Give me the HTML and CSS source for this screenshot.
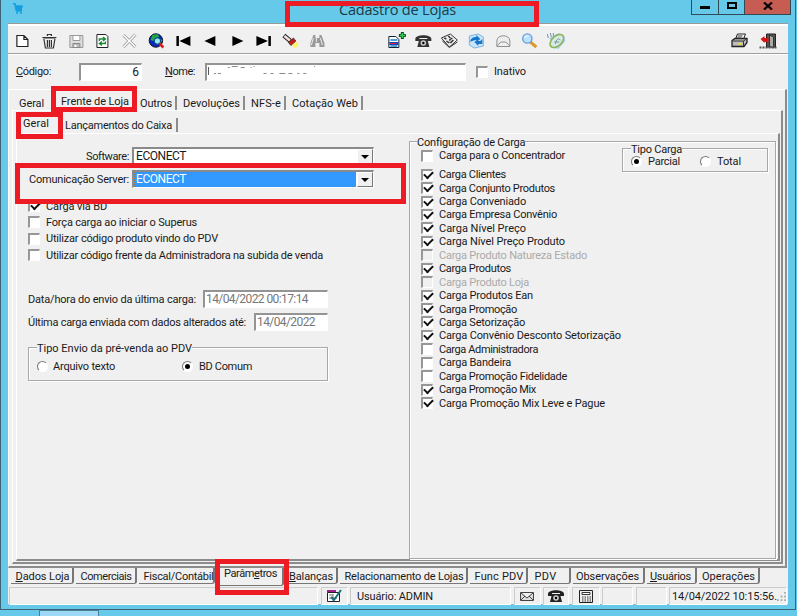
FILE: index.html
```html
<!DOCTYPE html>
<html lang="pt-BR">
<head>
<meta charset="utf-8">
<title>Cadastro de Lojas</title>
<link rel="stylesheet" href="styles.css">
</head>
<body>
<div class="window">
  <header class="titlebar">
    <svg class="appicon" viewBox="0 0 10 11"><path d="M0 .8h2l1 6h6M2 3h7v1H3M3 5.500h6M3 8h6" fill="none" stroke="#139fe0" stroke-width="1.6"/><circle cx="4" cy="10" r="1" fill="#139fe0"/><circle cx="8" cy="10" r="1" fill="#139fe0"/></svg>
    <h1><span data-w="117">Cadastro de Lojas</span></h1>
    <div class="winbtns"><i class="min"><b></b></i><i class="max"><b></b></i><i class="close"><svg viewBox="0 0 10 8"><path d="M1 .5l8 7M9 .5l-8 7" stroke="#000" stroke-width="2.2"/></svg></i></div>
  </header>
  <main class="client">
    <nav class="toolbar">
      <div class="tools">
        <svg viewBox="0 0 18 16"><path d="M3.500 2.500h7l4 4v7h-11zM10.500 2.500v4h4" fill="#fff" stroke="#222" stroke-width="1.2"/></svg>
        <svg viewBox="0 0 18 16"><path d="M3 5h12M2 4.500h14M7 3V1.500h4V3M3.500 6l1.500 9h8l1.500-9M7 7v7M9 7v7M11 7v7" fill="none" stroke="#333" stroke-width="1.2"/></svg>
        <svg viewBox="0 0 18 16"><path d="M2.500 2.500h13v12h-13z" fill="#ddd" stroke="#999"/><path d="M5.500 2.500h7v5h-7z" fill="#fff" stroke="#999"/><path d="M5.500 10.500h7v4h-7z" fill="#bbb" stroke="#888"/><path d="M7 12h2v2H7z" fill="#fff"/></svg>
        <svg viewBox="0 0 18 16"><path d="M3.500 1.500h9l2 2v11h-11z" fill="#fff" stroke="#222"/><path d="M6 8V6h5M9.500 4L12 6 9.500 8M12 8.500v2H7M8.500 8.500L6 10.500l2.500 2" fill="none" stroke="#158c35" stroke-width="1.4"/></svg>
        <svg viewBox="0 0 18 16"><path d="M3 2l12 12M15 1.500L3 14" stroke="#999" stroke-width="3"/><path d="M3 2l12 12M15 1.500L3 14" stroke="#fff" stroke-width="1.4"/></svg>
        <svg viewBox="0 0 18 16"><circle cx="8.500" cy="7.500" r="6.700" fill="#0828c0" stroke="#112"/><path d="M5 2l5-1 2 3-4 1-2 3-3-1zM12 6l3 1-2 4-3-2z" fill="#21a743"/><circle cx="10" cy="8" r="3.200" fill="#8deaf3" stroke="#083d7a"/><path d="M12 10.500l4 4" stroke="#d52020" stroke-width="2.500"/></svg>
        <svg viewBox="0 0 18 16"><path d="M2 3h2.500v10H2zM5 8l11-5v10z"/></svg>
        <svg viewBox="0 0 18 16"><path d="M3 8l11-5v10z"/></svg>
        <svg viewBox="0 0 18 16"><path d="M16 8L5 3v10z"/></svg>
        <svg viewBox="0 0 18 16"><path d="M14 3h2.500v10H14zM13.500 8L2 3v10z"/></svg>
        <svg viewBox="0 0 18 16"><path d="M2.500 2.500L9 8" stroke="#222" stroke-width="4.500"/><path d="M3 3l5.500 4.500" stroke="#f6dcdc" stroke-width="2.500"/><path d="M7 9.500L12 5l2.500 3-5 4.500z" fill="#c51c18" stroke="#432" stroke-width=".8"/><path d="M11 12l4-3 2 1-1 4-4 1z" fill="#fff45a"/></svg>
        <svg viewBox="0 0 18 16"><path d="M5 2h2v3h4V2h2l3 8v4h-5v-4H7v4H2v-4z" fill="#999"/><path d="M5 5l-2 7M8 5v4M12 5l2 7" stroke="#eee"/></svg>
      </div>
      <div class="tools mid">
        <svg viewBox="0 0 18 16"><path d="M1.500 3.500h7l3 3v8h-10z" fill="#fff" stroke="#123"/><path d="M3 7h7M3 13h7" stroke="#1680d0" stroke-width="1.500"/><path d="M2 9h9v3H2z" fill="#1243c0"/><path d="M3 10.500h6" stroke="#e22"/><path d="M15 -1v7M11.500 2.500h7" stroke="#064c22" stroke-width="3"/><path d="M15 0v5M12.500 2.500h5" stroke="#34ce59" stroke-width="1.300"/></svg>
        <svg viewBox="0 0 18 16"><path d="M1 6c0-5 16-5 16 0v2h-4V5H5v3H1zM5 6h8l2 8H3z" fill="#333"/><circle cx="9" cy="10" r="2.800" fill="#ccc"/><circle cx="9" cy="10" r="1.200"/></svg>
        <svg viewBox="0 0 18 16"><path d="M1 5l9-4 7 6-8 7z" fill="#eee" stroke="#333"/><path d="M2 8l7 6.500L17 9" fill="none" stroke="#333"/><path d="M4 5l2 1M8 3l2 2M12 5l-3 2M6 8l3 2M13 7l-3 3M9 7l1 1" stroke="#333" stroke-width="1.500"/></svg>
        <svg viewBox="0 0 18 16"><path d="M2 3l9-2 5 3v9l-9 2-5-3z" fill="#cbe6fa" stroke="#79b5e3"/><path d="M3 9c0-4 3-5 6-5V2l4 4-4 3V7C6 7 5 8 3 9zM15 6v5h-4v2l-4-4 4-3v2h2z" fill="#1676cc"/></svg>
        <svg viewBox="0 0 18 16"><path d="M2.500 13.500V8c0-7 13-7 13 0v5.500zM2.500 13l4-4h5l4 4" fill="#eee" stroke="#909090"/></svg>
        <svg viewBox="0 0 18 16"><path d="M10 9l6 5" stroke="#d99a28" stroke-width="3"/><circle cx="7" cy="5.500" r="4.600" fill="#b9e3fd" stroke="#6b9ddd" stroke-width="1.400"/><path d="M4 5c1-2 3-2 4-2" stroke="#fff" fill="none"/></svg>
        <svg viewBox="0 0 18 16"><path d="M2 5l9-5 6 3 1 5-7 8-4-1z" fill="#a7d1ee"/><ellipse cx="9.500" cy="8" rx="8" ry="4.900" transform="rotate(-42 9.500 8)" fill="#d7e9e3" stroke="#8eb45c" stroke-width="1.600"/><path d="M8 11c1-5 3-6 5-4M7 9h5M0 1l1 4M3 0l1 4M6 0v3" stroke="#7993a0" fill="none"/></svg>
      </div>
      <div class="tools end">
        <svg viewBox="0 0 18 16"><path d="M5 6l2-5h8l-2 5" fill="#fff" stroke="#222"/><path d="M1.500 7.500l3-2h12v4l-3 4h-12z" fill="#bbb" stroke="#222" stroke-width="1.300"/><path d="M2 8h11v5M13 8l3-2M7 3h5M6 5h5" fill="none" stroke="#333"/><path d="M8 10h3v1.500H8z" fill="#f1ee00"/></svg>
        <svg viewBox="0 0 18 16"><path d="M7 1h9v13H7z" fill="#555" stroke="#222"/><path d="M10 2l4 2v11l-4-2z" fill="#aaa" stroke="#333"/><path d="M0 14.500h18" stroke="#555" stroke-width="2" stroke-dasharray="2 1"/><path d="M1 6l4-3v2h4v4H5v1z" fill="#d91516"/></svg>
      </div>
    </nav>
    <div class="idrow">
      <label class="l-cod"><span data-w="35"><u>C</u>ódigo:</span></label><div class="field f-cod">6</div>
      <label class="l-nome"><span data-w="30"><u>N</u>ome:</span></label>
      <div class="field f-nome"><svg viewBox="0 0 260 15"><path d="M1.500 2v8" stroke="#555"/><path d="M7 8.500h2m2 0h3M21 2.500h2m2-1h6m3 1h4m6 0h1M57 8.500h3m4 0h3m6 0h6m3 0h4m5 0h2m4 0h3M47 1.500h1m60 0h1" stroke="#888"/></svg></div>
      <i class="cb"></i><span class="inativo" data-w="32">Inativo</span>
    </div>
    <section class="page outer">
      <div class="tabs t1">
        <span class="tab a"><span data-w="25">Geral</span></span><span class="tab b on"><span data-w="68">Frente de Loja</span></span><span class="tab c cut"><span data-w="32">Outros</span></span><span class="tab d cut"><span data-w="57">Devoluções</span></span><span class="tab e cut"><span data-w="30">NFS-e</span></span><span class="tab f cut"><span data-w="66">Cotação Web</span></span>
      </div>
      <section class="page middle">
        <div class="tabs t2"><span class="tab g on"><span data-w="26">Geral</span></span><span class="tab h cut"><span data-w="107">Lançamentos do Caixa</span></span></div>
        <section class="page inner">
          <div class="left">
            <div class="comborow"><label><span data-w="43">Software:</span></label><div class="combo"><span class="val"><span data-w="50">ECONECT</span></span><i class="drop"></i></div></div>
            <div class="comborow second"><label><span data-w="100">Comunicação Server:</span></label><div class="combo"><span class="val sel"><span data-w="50">ECONECT</span></span><i class="drop"></i></div></div>
            <ul class="opts">
              <li><i class="cb on"></i><span data-w="61">Carga via BD</span></li>
              <li><i class="cb"></i><span data-w="151">Força carga ao iniciar o Superus</span></li>
              <li><i class="cb"></i><span data-w="172">Utilizar código produto vindo do PDV</span></li>
              <li><i class="cb"></i><span data-w="277">Utilizar código frente da Administradora na subida de venda</span></li>
            </ul>
            <div class="daterow"><label data-w="168">Data/hora do envio da última carga:</label><div class="field d1"><span data-w="102">14/04/2022 00:17:14</span></div></div>
            <div class="daterow"><label data-w="218">Última carga enviada com dados alterados até:</label><div class="field d2"><span data-w="58">14/04/2022</span></div></div>
            <div class="group envio"><span class="legend"><span data-w="155">Tipo Envio da pré-venda ao PDV</span></span>
              <i class="rd"></i><span class="r1"><span data-w="62">Arquivo texto</span></span><i class="rd on"></i><span class="r2"><span data-w="53">BD Comum</span></span></div>
          </div>
          <div class="group config"><span class="legend"><span data-w="108">Configuração de Carga</span></span>
            <ul class="list">
              <li class="first"><i class="cb"></i><span data-w="126">Carga para o Concentrador</span></li>
              <li><i class="cb on"></i><span data-w="67">Carga Clientes</span></li>
              <li><i class="cb on"></i><span data-w="116">Carga Conjunto Produtos</span></li>
              <li><i class="cb on"></i><span data-w="87">Carga Conveniado</span></li>
              <li><i class="cb on"></i><span data-w="118">Carga Empresa Convênio</span></li>
              <li><i class="cb on"></i><span data-w="87">Carga Nível Preço</span></li>
              <li><i class="cb on"></i><span data-w="126">Carga Nível Preço Produto</span></li>
              <li class="off"><i class="cb"></i><span data-w="148">Carga Produto Natureza Estado</span></li>
              <li><i class="cb on"></i><span data-w="72">Carga Produtos</span></li>
              <li class="off"><i class="cb"></i><span data-w="90">Carga Produto Loja</span></li>
              <li><i class="cb on"></i><span data-w="94">Carga Produtos Ean</span></li>
              <li><i class="cb on"></i><span data-w="78">Carga Promoção</span></li>
              <li><i class="cb on"></i><span data-w="86">Carga Setorização</span></li>
              <li><i class="cb on"></i><span data-w="182">Carga Convênio Desconto Setorização</span></li>
              <li><i class="cb"></i><span data-w="99">Carga Administradora</span></li>
              <li><i class="cb"></i><span data-w="72">Carga Bandeira</span></li>
              <li><i class="cb"></i><span data-w="128">Carga Promoção Fidelidade</span></li>
              <li><i class="cb on"></i><span data-w="97">Carga Promoção Mix</span></li>
              <li><i class="cb on"></i><span data-w="166">Carga Promoção Mix Leve e Pague</span></li>
            </ul>
            <div class="group tipo"><span class="legend"><span data-w="51">Tipo Carga</span></span><i class="rd on"></i><span class="r3"><span data-w="32">Parcial</span></span><i class="rd"></i><span class="r4"><span data-w="24">Total</span></span></div>
          </div>
        </section>
      </section>
    </section>
    <div class="btabs">
      <span class="bt k1"><span data-w="54"><u>D</u>ados Loja</span></span><span class="bt k2"><span data-w="51">Comerciais</span></span><span class="bt k3"><span data-w="70">Fiscal/Contábil</span></span><span class="bt k4 on"><span data-w="53">Parâm<u>e</u>tros</span></span><span class="bt k5"><span data-w="44"><u>B</u>alanças</span></span><span class="bt k6"><span data-w="119">Relacionamento de Lojas</span></span><span class="bt k7"><span data-w="49">Func PDV</span></span><span class="bt k8"><span data-w="22">PDV</span></span><span class="bt k9"><span data-w="63">Observações</span></span><span class="bt k10"><span data-w="41"><u>U</u>suários</span></span><span class="bt k11"><span data-w="53">Operações</span></span>
    </div>
    <footer class="status">
      <div></div>
      <div><svg viewBox="0 0 18 16"><path d="M2.500 4.500h12v9h-12z" fill="#fff" stroke="#222"/><path d="M2 3h9" stroke="#a0208a" stroke-width="2"/><path d="M4 10h8M4 7h4M8 6v7" stroke="#777"/><path d="M6 9l3 3 7-10" fill="none" stroke="#176f7b" stroke-width="2"/></svg></div>
      <div class="user"><span data-w="76">Usuário: ADMIN</span></div>
      <div><svg viewBox="0 0 18 16"><path d="M2.500 4.500h13v8h-13zM3 5l6 5 6-5M3 12l4-4M15 12l-4-4" fill="#ddd" stroke="#444"/></svg></div>
      <div><svg viewBox="0 0 18 16"><path d="M1 6c0-5 16-5 16 0v2h-4V5H5v3H1zM5 6h8l2 8H3z" fill="#222"/><circle cx="9" cy="10" r="2.800" fill="#ccc"/><circle cx="9" cy="10" r="1.200"/></svg></div>
      <div><svg viewBox="0 0 18 16"><path d="M2.500 2.500h13v12h-13z" fill="#eee" stroke="#222"/><path d="M5 4.500h8v2H5z" fill="#fff" stroke="#333"/><path d="M5 9h9M5 11h9M5 13h9" stroke="#333" stroke-dasharray="1.500 1"/></svg></div>
      <div></div><div></div>
      <div class="clock"><span data-w="105">14/04/2022 10:15:56.</span><svg class="grip" viewBox="0 0 10 10"><path d="M8 1h2M4 5h2m2 0h2M0 9h2m2 0h2m2 0h2" stroke="#aaa" stroke-width="2"/></svg></div>
    </footer>
  </main>
</div>
<div class="taskbar"><i></i></div>
<i class="mark m1"></i><i class="mark m2"></i><i class="mark m3"></i><i class="mark m4"></i><i class="mark m5"></i>
<script src="fit.js"></script>
</body>
</html>
```
FILE: styles.css
```css
* { box-sizing: border-box; }
body { margin: 0; width: 797px; height: 616px; overflow: hidden; background: #66c9ea; font: 11px/13px Roboto, "Liberation Sans", sans-serif; color: #1a1a1a; position: relative; }
i { font-style: normal; display: block; flex: none; }
ul { list-style: none; margin: 0; padding: 0; }
[data-w] { display: inline-block; white-space: nowrap; }
u { text-underline-offset: 1px; }
.window { width: 796px; height: 610px; border: solid #3d6475; border-width: 0 1px 1px; padding: 0 7px; }
.titlebar { height: 23px; display: flex; align-items: flex-start; }
.appicon { width: 10px; height: 11px; margin: 3px 0 0 5px; flex: none; }
h1 { margin: 1px 0 0 316px; width: 351px; font: 14.500px/18px "Open Sans", sans-serif; color: #1d3944; flex: none; }
.winbtns { display: flex; height: 15px; border: 1px solid #304b55; border-top: 0; width: 100px; margin: 0 -2px 0 1px; flex: none; }
.winbtns i { display: flex; justify-content: center; border-right: 1px solid #304b55; width: 27px; }
.winbtns .max { width: 26px; }
.winbtns .close { flex: 1; border: 0; background: #c75c52; }
.close svg { width: 10px; height: 8px; margin-top: 2px; }
.min b { width: 10px; height: 3px; background: #000; margin-top: 6px; }
.max b { width: 10px; height: 7px; border: 2px solid #000; margin-top: 2px; }
.client { height: 581px; width: 780px; background: #f0f0f0; display: flex; flex-direction: column; }
.toolbar { height: 31px; border-top: 1px solid #999; border-bottom: 1px solid #a0a0a0; box-shadow: inset 0 2px #fff, 0 1px #fff; display: flex; align-items: center; padding: 4px 5px 0 1px; flex: none; }
.tools { display: flex; width: 322px; }
.tools svg { width: 26.800px; height: 16px; overflow: visible; }
.tools.mid { margin-left: 52px; width: 187px; }
.tools.mid svg { width: 26.700px; }
.tools.end { margin-left: auto; width: 58px; }
.tools.end svg { width: 29px; height: 16px; }
.idrow { height: 35px; display: flex; align-items: center; padding-left: 8px; flex: none; }
.field { background: #fff; border: 1px solid #fff; border-top: 2px solid #949494; border-left: 2px solid #949494; height: 18px; line-height: 14px; font-size: 12px; }
.l-cod { width: 63px; }
.f-cod { width: 63px; text-align: right; padding-right: 2px; }
.l-nome { width: 40px; margin-left: 23px; }
.f-nome { width: 261px; }
.f-nome svg { display: block; width: 258px; height: 15px; }
.idrow .cb { margin: 0 6px 0 10px; }
.cb { width: 12px; height: 12px; background: #fff; border: 1px solid #fff; border-top: 2px solid #979797; border-left: 2px solid #979797; }
.cb.on::after { content: ""; display: block; width: 7px; height: 4px; border: solid #111; border-width: 0 0 2px 2px; transform: translate(1px, 0) rotate(-45deg); }
.page { border: solid #fff; border-width: 1px 2px 2px 1px; border-right-color: #8c8c8c; border-bottom-color: #8c8c8c; display: flex; flex-direction: column; }
.outer { width: 779px; height: 479px; padding: 0 2px 2px 3px; flex: none; }
.tabs { display: flex; flex: none; }
.t1 { height: 20px; padding-top: 6px; }
.t2 { height: 22px; padding-top: 7px; }
.tab { display: block; height: 14px; line-height: 15px; flex: none; }
.tab.on { margin-top: -2px; }
.tab.cut { border-right: 2px solid #8c8c8c; }
.a { width: 49px; padding-left: 7px; }
.b { width: 79px; }
.c { width: 37px; }
.d { width: 68px; padding-left: 6px; }
.e { width: 41px; padding-left: 6px; }
.f { width: 77px; padding-left: 6px; }
.g { width: 49px; padding-left: 7px; }
.h { width: 113px; }
.middle { flex: 1; padding: 0 1px 1px 3px; }
.inner { flex: 1; flex-direction: row; }
.left { width: 392px; padding: 13px 0 0 11px; flex: none; }
.comborow { display: flex; align-items: center; height: 18px; }
.comborow.second { margin-top: 5px; }
.comborow label { width: 101px; text-align: right; margin-right: 3px; }
.combo { width: 242px; height: 18px; display: flex; background: #fff; border: 1px solid #fff; border-top: 2px solid #8a8a8a; border-left: 2px solid #8a8a8a; }
.val { flex: 1; padding-left: 2px; line-height: 15px; font-size: 12px; }
.sel { background: #3399ff; color: #fff; outline: 1px dotted #bd7231; outline-offset: -1px; margin-right: 1px; }
.drop { width: 16px; height: 15px; background: #f0f0f0; border: 1px solid #fff; border-right-color: #777; border-bottom-color: #777; display: flex; align-items: center; justify-content: center; }
.drop::after { content: ""; border: 4px solid transparent; border-top-color: #000; border-bottom: 0; }
.opts { margin: 10px 0 0; }
.opts li { display: flex; align-items: center; height: 16.300px; gap: 6px; }
.daterow { display: flex; align-items: center; height: 18px; margin-top: 5px; width: 300px; justify-content: space-between; }
.opts + .daterow { margin-top: 27px; }
.daterow .field { color: #777; padding-left: 1px; }
.d1 { width: 125px; }
.d2 { width: 74px; }
.group { border: 1px solid #a8a8a8; box-shadow: 1px 1px #fff, inset 1px 1px #fff; position: relative; }
.legend { position: absolute; top: -6px; left: 8px; background: #f0f0f0; line-height: 13px; }
.envio { width: 300px; height: 34px; margin-top: 16px; display: flex; align-items: center; padding: 4px 0 0 8px; }
.rd { width: 11px; height: 11px; border-radius: 50%; background: #fff; border: 1px solid #fff; border-top-color: #777; border-left-color: #777; }
.rd.on::after { content: ""; display: block; width: 5px; height: 5px; margin: 2px; border-radius: 50%; background: #000; }
.r1 { width: 129px; margin-left: 5px; }
.r2 { margin-left: 6px; }
.config { width: 367px; height: 418px; margin-top: 7px; display: flex; justify-content: space-between; }
.config > .legend { left: 7px; }
.list { padding: 7px 0 0 11px; }
.list li { display: flex; align-items: center; gap: 6px; height: 13.450px; white-space: nowrap; }
.list .first { margin-bottom: 5.500px; }
.off { color: #aaa; }
.off .cb { background: #f0f0f0; }
.tipo { width: 146px; height: 24px; margin: 6px 7px 0 0; display: flex; align-items: center; padding: 3px 0 0 8px; }
.r3 { width: 52px; margin-left: 6px; }
.r4 { margin-left: 6px; }
.btabs { display: flex; height: 17px; padding-left: 3px; gap: 2px; flex: none; }
.bt { display: block; height: 16px; line-height: 17px; border: solid #777; border-width: 0 2px 1px 0; border-radius: 0 0 3px 0; padding-left: 4.500px; flex: none; }
.bt.on { line-height: 11px; height: 18px; }
.k1 { width: 63px; }
.k2 { width: 61px; }
.k3 { width: 76px; }
.k4 { width: 67px; padding-left: 7px; }
.k5 { width: 52px; padding-left: 3px; }
.k6 { width: 128px; }
.k7 { width: 58px; }
.k8 { width: 41px; }
.k9 { width: 72px; padding-left: 3px; }
.k10 { width: 50px; padding-left: 3px; }
.k11 { width: 61px; padding-left: 3px; }
.status { display: grid; grid-template-columns: 309px 27px 161px 27px 26px 28px 31px 31px 118px; gap: 2.500px; height: 17px; margin: 2px 0 0 1px; flex: none; }
.status > div { border: 1px solid #ccc; border-right-color: #fff; border-bottom-color: #fff; display: flex; align-items: center; justify-content: center; min-width: 0; }
.status svg { width: 18px; height: 16px; flex: none; }
.status .user { justify-content: flex-start; padding-left: 6px; }
.status .clock { justify-content: flex-start; padding-left: 2px; }
.status .grip { width: 9px; height: 9px; }
.taskbar { height: 6px; padding-left: 39px; }
.taskbar i { width: 60px; height: 7px; background: #9ed8f7; border: 1px solid #4a7e96; border-bottom: 0; }
.mark { position: absolute; border: 5px solid #ed1c24; }
.m1 { left: 285px; top: 1px; width: 254px; height: 26px; }
.m2 { left: 51px; top: 86px; width: 86px; height: 26px; }
.m3 { left: 16px; top: 112px; width: 47px; height: 27px; }
.m4 { left: 15px; top: 163px; width: 391px; height: 41px; }
.m5 { left: 215px; top: 559px; width: 74px; height: 36px; }
```
FILE: fit.js
```js
// Tracks each caption to its design width in pixels.
document.querySelectorAll('[data-w]').forEach(function (el) {
  var width = el.getBoundingClientRect().width;
  el.style.letterSpacing = (el.dataset.w - width) / el.textContent.length + 'px';
});
```
